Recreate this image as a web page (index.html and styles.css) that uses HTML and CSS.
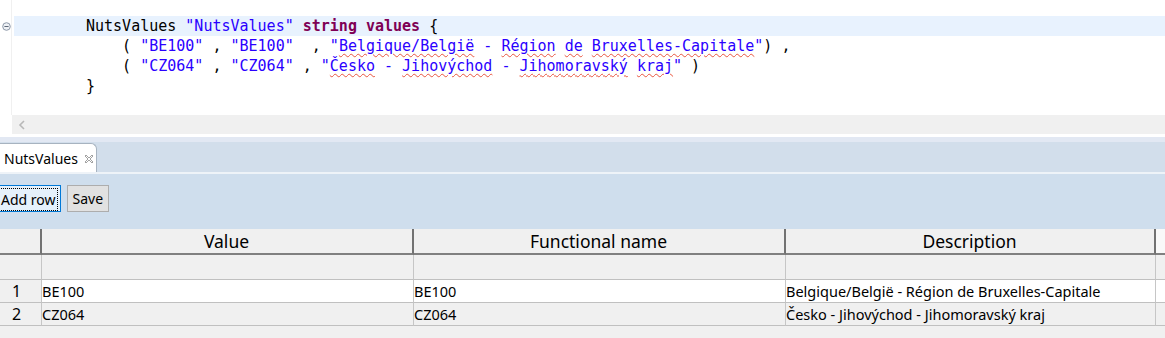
FILE: index.html
```html
<!DOCTYPE html>
<html lang="en">
<head>
  <meta charset="UTF-8" />
  <title>NutsValues</title>
  <link rel="stylesheet" href="styles.css">
</head>
<body>

  <div class="editor">
    <div class="code-area">
      <div class="gutter">
        <div class="fold">
          <svg width="9" height="9" viewBox="0 0 9 9"><circle cx="4.5" cy="4.5" r="3.8" fill="#eef1f5" stroke="#8d98a8" stroke-width="1"/><line x1="2.4" y1="4.5" x2="6.6" y2="4.5" stroke="#5d6878" stroke-width="1"/></svg>
        </div>
      </div>
      <div class="code">
        <div class="line current">NutsValues <span class="str">"NutsValues"</span> <span class="kw">string values</span> {</div>
        <div class="line">    ( <span class="str">"BE100"</span> , <span class="str">"BE100"</span>  , <span class="str">"<span class="sp">Belgique/België</span> - <span class="sp">Région</span> <span class="sp">de</span> <span class="sp">Bruxelles-Capitale</span>"</span>) ,</div>
        <div class="line">    ( <span class="str">"CZ064"</span> , <span class="str">"CZ064"</span> , <span class="str">"<span class="sp">Česko</span> - <span class="sp">Jihovýchod</span> - <span class="sp">Jihomoravský</span> <span class="sp">kraj</span>"</span> )</div>
        <div class="line">}</div>
      </div>
    </div>
    <div class="hscroll">
      <svg width="8" height="10" viewBox="0 0 8 10"><polyline points="6,1 2,5 6,9" fill="none" stroke="#b8b8b8" stroke-width="1.6"/></svg>
    </div>
  </div>

  <div class="sash"></div>

  <div class="tabbar">
    <div class="tab">
      <span>NutsValues</span>
      <svg class="close" width="10" height="10" viewBox="0 0 10 10"><polygon points="1,2 2,1 5,4 8,1 9,2 6,5 9,8 8,9 5,6 2,9 1,8 4,5" fill="#fff" stroke="#8a8a8a" stroke-width="0.8" stroke-linejoin="round"/></svg>
    </div>
  </div>

  <div class="toolbar">
    <button class="btn focused"><span>Add row</span></button>
    <button class="btn">Save</button>
  </div>

  <div class="grid-wrap">
    <table class="grid">
      <colgroup>
        <col style="width:42px">
        <col style="width:372px">
        <col style="width:372px">
        <col style="width:370px">
        <col style="width:40px">
      </colgroup>
      <thead>
        <tr class="head">
          <th></th>
          <th>Value</th>
          <th>Functional name</th>
          <th>Description</th>
          <th class="extra"></th>
        </tr>
        <tr class="filter">
          <td class="rh"></td>
          <td></td>
          <td></td>
          <td></td>
          <td></td>
        </tr>
      </thead>
      <tbody>
        <tr class="row odd">
          <td class="rh">1</td>
          <td>BE100</td>
          <td>BE100</td>
          <td>Belgique/België - Région de Bruxelles-Capitale</td>
          <td></td>
        </tr>
        <tr class="row even">
          <td class="rh">2</td>
          <td>CZ064</td>
          <td>CZ064</td>
          <td>Česko - Jihovýchod - Jihomoravský kraj</td>
          <td></td>
        </tr>
      </tbody>
    </table>
  </div>

</body>
</html>
```

FILE: styles.css
```css
body {
  margin: 0;
  width: 1165px;
  height: 338px;
  overflow: hidden;
  background-color: #f0f0f0;
  font-family: "Noto Sans", Arial, sans-serif;
  color: #000;
}

/* code editor */

.editor {
  background: white;
  height: 137px;
  display: flex;
  flex-direction: column;
}

.code-area {
  display: flex;
  flex: 1;
}

.gutter {
  width: 11px;
  border-right: 1px solid #f0f0f0;
  padding-top: 16px;
}

.fold {
  height: 20px;
  display: flex;
  align-items: center;
  padding-left: 2px;
}

.code {
  flex: 1;
  margin-left: 2px;
  padding-top: 16px;
  font-family: "DejaVu Sans Mono", "Liberation Mono", monospace;
  font-size: 15px;
}

.line {
  height: 20px;
  line-height: 20px;
  padding-left: 72px;
  white-space: pre;
}

.line.current {
  background-color: #e8f2fe;
}

.str {
  color: #2a00ff;
}

.kw {
  color: #7f0055;
  font-weight: bold;
}

.sp {
  text-decoration: underline wavy #e8553f;
  text-decoration-thickness: 1px;
  text-underline-offset: 2px;
}

.hscroll {
  height: 19px;
  margin-left: 12px;
  margin-bottom: 3px;
  background-color: #f0f0f0;
  display: flex;
  align-items: center;
  padding-left: 6px;
}

.sash {
  height: 5px;
  background: #e2e8f3;
}

/* tabs */

.tabbar {
  height: 30px;
  background-color: #d2deeb;
  border-bottom: 2px solid #eef3f8;
  display: flex;
  align-items: flex-end;
}

.tab {
  width: 92px;
  height: 28px;
  background: white;
  border: 1px solid #a7b3c0;
  border-left: none;
  border-bottom: none;
  border-top-right-radius: 6px;
  display: flex;
  align-items: center;
  gap: 6px;
  padding-left: 4px;
  font-size: 14px;
}

.tab .close {
  margin-top: 1px;
}

/* toolbar */

.toolbar {
  height: 55px;
  background-color: #cfdeed;
  display: flex;
  align-items: flex-start;
  gap: 6px;
  padding-top: 11px;
  box-sizing: border-box;
}

.btn {
  height: 27px;
  padding: 0 5px;
  background: #e1e1e1;
  border: 1px solid #adadad;
  font-family: "Noto Sans", Arial, sans-serif;
  font-size: 14px;
  color: #000;
}

.btn.focused {
  margin-left: -7px;
  border: 1px solid #0078d7;
  background: #e5f1fb;
  padding: 2px;
}

.btn.focused span {
  display: block;
  height: 21px;
  line-height: 21px;
  padding: 0 1px 0 4px;
  border: 1px dotted #000;
}

/* table */

.grid-wrap {
  overflow: hidden;
}

.grid {
  table-layout: fixed;
  border-collapse: separate;
  border-spacing: 0;
  width: 1196px;
  font-size: 14.5px;
}

.grid th,
.grid td {
  padding: 0 1px 0 0;
  white-space: nowrap;
  overflow: hidden;
  box-sizing: border-box;
}

.head th {
  height: 25px;
  background: #f0f0f0;
  font-weight: normal;
  font-size: 17.5px;
  border-right: 2px solid #727272;
  border-bottom: 2px solid #808080;
}

.head th.extra {
  background: #f9f9f9;
}

.filter td {
  height: 25px;
  background: #f0f0f0;
  border-right: 1px solid #c6c6c6;
  border-bottom: 1px solid #c0c0c0;
}

.row td {
  height: 23px;
  border-right: 1px solid #c6c6c6;
  border-bottom: 1px solid #c0c0c0;
}

.row.odd td {
  background: white;
}

.row.even td {
  background: #f0f0f0;
}

.grid td.rh {
  background: #f0f0f0;
  padding-left: 12px;
  font-size: 16px;
}
```
